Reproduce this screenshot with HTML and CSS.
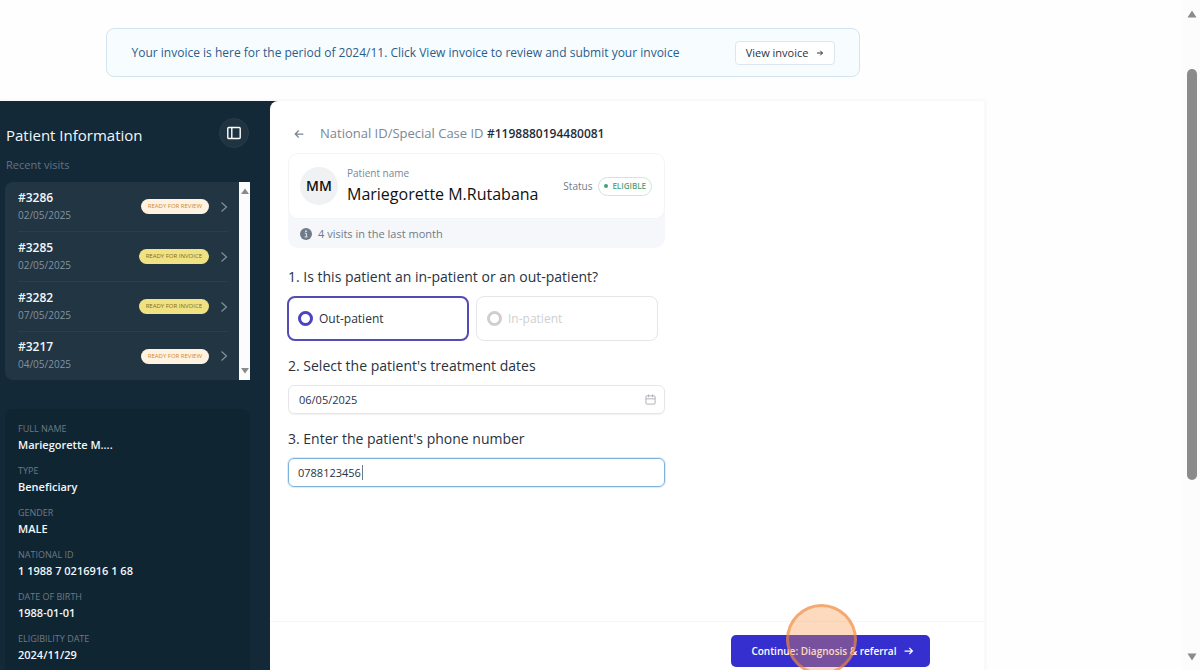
FILE: index.html
```html
<!DOCTYPE html>
<html lang="en">
<head>
    <meta charset="UTF-8">
    <meta name="viewport" content="width=device-width, initial-scale=1.0">
    <title>Patient visit</title>
    <link rel="stylesheet" href="styles.css">
</head>
<body>

    <div class="page">

        <!-- Invoice banner -->
        <div class="banner">
            <p class="banner-text">Your invoice is here for the period of 2024/11. Click View invoice to review and submit your invoice</p>
            <button type="button" class="banner-button">
                View invoice
                <svg class="arrow" viewBox="0 0 16 16"><path d="M2 8h11M8.500 3.500L13 8l-4.500 4.500"/></svg>
            </button>
        </div>

        <div class="app">

            <aside class="sidebar">
                <div class="sidebar-header">
                    <h2>Patient Information</h2>
                    <button type="button" class="toggle" aria-label="Toggle sidebar">
                        <svg viewBox="0 0 16 16"><rect x="1.8" y="2.5" width="12.4" height="11" rx="1"/><path d="M5.8 2.5v11"/></svg>
                    </button>
                </div>
                <h3>Recent visits</h3>

                <div class="visits">
                    <ul class="visit-list">
                        <li class="visit">
                            <div>
                                <div class="visit-id">#3286</div>
                                <div class="visit-date">02/05/2025</div>
                            </div>
                            <span class="tag review">READY FOR REVIEW</span>
                            <svg class="chevron" viewBox="0 0 8 12"><path d="M1.5 1.5L6.5 6l-5 4.5"/></svg>
                        </li>
                        <li class="visit">
                            <div>
                                <div class="visit-id">#3285</div>
                                <div class="visit-date">02/05/2025</div>
                            </div>
                            <span class="tag invoice">READY FOR INVOICE</span>
                            <svg class="chevron" viewBox="0 0 8 12"><path d="M1.5 1.5L6.5 6l-5 4.5"/></svg>
                        </li>
                        <li class="visit">
                            <div>
                                <div class="visit-id">#3282</div>
                                <div class="visit-date">07/05/2025</div>
                            </div>
                            <span class="tag invoice">READY FOR INVOICE</span>
                            <svg class="chevron" viewBox="0 0 8 12"><path d="M1.5 1.5L6.5 6l-5 4.5"/></svg>
                        </li>
                        <li class="visit">
                            <div>
                                <div class="visit-id">#3217</div>
                                <div class="visit-date">04/05/2025</div>
                            </div>
                            <span class="tag review">READY FOR REVIEW</span>
                            <svg class="chevron" viewBox="0 0 8 12"><path d="M1.5 1.5L6.5 6l-5 4.5"/></svg>
                        </li>
                    </ul>
                    <div class="list-scroll">
                        <svg viewBox="0 0 10 10"><path d="M5 2.5l4 5.5H1z"/></svg>
                        <svg viewBox="0 0 10 10"><path d="M5 7.5l4-5.5H1z"/></svg>
                    </div>
                </div>

                <dl class="details">
                    <div><dt>FULL NAME</dt><dd>Mariegorette M....</dd></div>
                    <div><dt>TYPE</dt><dd>Beneficiary</dd></div>
                    <div><dt>GENDER</dt><dd>MALE</dd></div>
                    <div><dt>NATIONAL ID</dt><dd>1 1988 7 0216916 1 68</dd></div>
                    <div><dt>DATE OF BIRTH</dt><dd>1988-01-01</dd></div>
                    <div><dt>ELIGIBILITY DATE</dt><dd>2024/11/29</dd></div>
                </dl>
            </aside>

            <main class="main">
                <form class="content" id="visit-form">
                    <div class="case">
                        <button type="button" class="back" aria-label="Back">
                            <svg class="arrow" viewBox="0 0 16 16"><path d="M15 8H2.500M7.500 2.500L2 8l5.500 5.500"/></svg>
                        </button>
                        <span>National ID/Special Case ID <b>#1198880194480081</b></span>
                    </div>

                    <div class="patient">
                        <div class="patient-top">
                            <div class="avatar">MM</div>
                            <div class="patient-name">
                                <small>Patient name</small>
                                <h1>Mariegorette M.Rutabana</h1>
                            </div>
                            <span class="status-label">Status</span>
                            <span class="status">ELIGIBLE</span>
                        </div>
                        <div class="patient-note">
                            <svg viewBox="0 0 12 12"><circle cx="6" cy="6" r="6" fill="#6f7b88"/><path d="M4.8 5.2h1.6v3.6M4.6 8.9h2.9" stroke="#e3e7ec" fill="none"/><circle cx="6" cy="3.2" r=".9" fill="#e3e7ec"/></svg>
                            4 visits in the last month
                        </div>
                    </div>

                    <fieldset class="question">
                        <legend>1. Is this patient an in-patient or an out-patient?</legend>
                        <div class="options">
                            <label class="option selected"><input type="radio" name="kind" value="out" checked> Out-patient</label>
                            <label class="option disabled"><input type="radio" name="kind" value="in" disabled> In-patient</label>
                        </div>
                    </fieldset>

                    <div class="question">
                        <label for="dates">2. Select the patient's treatment dates</label>
                        <div class="field">
                            <input type="text" id="dates" value="06/05/2025">
                            <svg viewBox="0 0 12 12"><rect x="1" y="2" width="10" height="9" rx=".8"/><path d="M1 5.3h10M3.8.5v3M8.2.5v3"/></svg>
                        </div>
                    </div>

                    <div class="question">
                        <label for="phone">3. Enter the patient's phone number</label>
                        <div class="field active">
                            <input type="text" id="phone" value="0788123456">
                            <span class="caret"></span>
                        </div>
                    </div>
                </form>

                <div class="footer">
                    <button type="submit" form="visit-form" class="continue">
                        Continue: Diagnosis &amp; referral
                        <svg class="arrow" viewBox="0 0 16 16"><path d="M1 8h12M8.500 3L13.500 8l-5 5"/></svg>
                        <span class="click-mark"></span>
                    </button>
                </div>
            </main>
        </div>
    </div>

    <!-- Page scrollbar -->
    <div class="page-scroll">
        <svg viewBox="0 0 12 10"><path d="M6 1.500l4.500 7h-9z"/></svg>
        <div class="track"><div class="thumb"></div></div>
        <svg viewBox="0 0 12 10"><path d="M6 8.500l4.500-7h-9z"/></svg>
    </div>

</body>
</html>
```

FILE: styles.css
```css
* {
    box-sizing: border-box;
}

body {
    margin: 0;
    display: flex;
    height: 100vh;
    overflow: hidden;
    font-family: "Open Sans", "Noto Sans", sans-serif;
    font-size: 11px;
    line-height: 16px;
    color: #27333f;
    background-color: #fefefe;
}

h1, h2, h3, p, ul, dl, dd {
    margin: 0;
    padding: 0;
    font-weight: 400;
}

button, input {
    font: inherit;
    color: inherit;
}

button {
    cursor: pointer;
}

svg {
    display: block;
    flex: none;
}

.page {
    flex: 1;
    min-width: 0;
    display: flex;
    flex-direction: column;
}

.arrow {
    width: 10px;
    height: 10px;
    fill: none;
    stroke: currentColor;
    stroke-width: 2;
}

/* Banner */
.banner {
    display: flex;
    align-items: center;
    justify-content: space-between;
    width: 754px;
    max-width: 90%;
    min-height: 49px;
    margin: 28px 0 24px 9%;
    padding: 0 24px;
    border: 1px solid #d3e5f0;
    border-radius: 8px;
    background-color: #f7fcff;
}

.banner-text {
    font-size: 12px;
    color: #2b5c8c;
}

.banner-button {
    display: flex;
    align-items: center;
    gap: 8px;
    height: 24px;
    padding: 0 10px;
    border: 1px solid #dce6f0;
    border-radius: 4px;
    background-color: #fff;
    white-space: nowrap;
}

.banner-button .arrow {
    width: 8px;
    height: 8px;
}

.app {
    flex: 1;
    min-height: 0;
    display: flex;
    width: 83.3%;
    background: linear-gradient(to right, #132938 290px, #fefefe 290px);
    box-shadow: 0 0 4px #f0f0f2;
}

/* Sidebar */
.sidebar {
    flex: none;
    width: 270px;
    padding: 17px 20px 0 5px;
    overflow: hidden;
    color: #f4f7f9;
}

.sidebar-header {
    display: flex;
    align-items: center;
    justify-content: space-between;
    padding: 0 1px;
}

.sidebar-header h2 {
    padding-top: 4px;
    font-size: 15px;
    line-height: 20px;
}

.toggle {
    display: flex;
    align-items: center;
    justify-content: center;
    width: 30px;
    height: 30px;
    padding: 0;
    border: 1px solid #293b49;
    border-radius: 50%;
    background-color: #203341;
}

.toggle svg {
    width: 16px;
    height: 16px;
    fill: none;
    stroke: #fff;
    stroke-width: 1.4;
}

.sidebar h3 {
    margin: 9px 0 9px 1px;
    font-size: 11px;
    color: #647480;
}

.visits {
    display: flex;
    height: 198px;
    border-radius: 8px 0 0 8px;
    background-color: #213543;
}

.visit-list {
    flex: 1;
    padding: 0 11px 0 13px;
    list-style: none;
}

.visit {
    display: flex;
    align-items: center;
    height: 50px;
    border-bottom: 1px solid #2a3f4d;
}

.visit:last-child {
    height: 48px;
    border-bottom: none;
}

.visit-id {
    font-size: 12px;
    font-weight: 600;
}

.visit-date {
    font-size: 10px;
    line-height: 18px;
    color: #8493a0;
}

.tag {
    margin-left: auto;
    padding: 0 7px;
    border-radius: 8px;
    font-size: 6px;
    line-height: 15px;
    white-space: nowrap;
}

.review {
    background-color: #fff2e0;
    color: #d08a2e;
}

.invoice {
    background-color: #f0e283;
    color: #85691a;
}

.chevron {
    width: 8px;
    height: 12px;
    margin-left: 11px;
    fill: none;
    stroke: #83919c;
    stroke-width: 1.2;
}

.list-scroll {
    display: flex;
    flex-direction: column;
    align-items: center;
    justify-content: space-between;
    width: 11px;
    padding: 4px 0;
    background-color: #fcfcfc;
    fill: #8a8a8a;
}

.list-scroll svg {
    width: 10px;
    height: 10px;
}

.details {
    margin-top: 29px;
    padding: 12px 13px;
    border-radius: 8px;
    background-color: #102532;
}

.details div {
    margin-bottom: 10px;
}

.details dt {
    font-size: 9px;
    color: #6b7a86;
}

.details dd {
    font-weight: 600;
}

/* Main panel */
.main {
    flex: 1;
    display: flex;
    flex-direction: column;
    border-right: 1px solid #fafafb;
    border-radius: 8px 0 0 0;
    background-color: #fff;
}

.content {
    flex: 1;
    max-width: 395px;
    padding: 23px 0 0 18px;
}

.case {
    display: flex;
    align-items: center;
    gap: 16px;
    margin-bottom: 10px;
    font-size: 13px;
    line-height: 18px;
    color: #7b8794;
}

.case b {
    font-size: 12px;
    font-weight: 600;
    color: #1f2c38;
}

.back {
    padding: 0 0 0 6px;
    border: none;
    background: none;
}

.patient {
    margin-bottom: 19px;
    overflow: hidden;
    border-radius: 10px;
    background-color: #f5f7fb;
}

.patient-top {
    display: flex;
    align-items: center;
    height: 66px;
    padding: 0 12px 0 11px;
    border: 1px solid #f3f4f6;
    border-radius: 10px;
    background-color: #fff;
}

.avatar {
    width: 38px;
    height: 38px;
    border-radius: 50%;
    background-color: #f0f1f2;
    font-size: 14px;
    font-weight: 600;
    line-height: 38px;
    text-align: center;
    color: #111;
}

.patient-name {
    flex: 1;
    margin-left: 9px;
}

.patient-name small {
    display: block;
    font-size: 10px;
    color: #7b8794;
}

.patient-name h1 {
    font-size: 16px;
    line-height: 26px;
    color: #111;
}

.status-label {
    margin-right: 6px;
    font-size: 10px;
    color: #6f7b88;
}

.status {
    display: flex;
    align-items: center;
    height: 19px;
    padding: 0 5px;
    border: 1px solid #cfe6da;
    border-radius: 10px;
    font-size: 8px;
    font-weight: 600;
    color: #57a67c;
}

.status::before {
    content: "";
    width: 4px;
    height: 4px;
    margin-right: 4px;
    border-radius: 50%;
    background-color: #45a074;
}

.patient-note {
    display: flex;
    align-items: center;
    gap: 6px;
    height: 29px;
    padding: 0 12px;
    color: #6f7b88;
}

.patient-note svg {
    width: 12px;
    height: 12px;
}

.question {
    margin: 0 0 15px;
    padding: 0;
    border: none;
}

.question legend,
.question > label {
    display: block;
    margin-bottom: 9px;
    padding: 0;
    font-size: 14px;
    line-height: 20px;
}

.options {
    display: flex;
    gap: 7px;
    margin: 0 7px 0 -1px;
}

.option {
    flex: 1;
    display: flex;
    align-items: center;
    gap: 6px;
    height: 45px;
    padding: 0 10px;
    border: 1px solid #e6e6e8;
    border-radius: 8px;
    font-size: 12px;
}

.option.selected {
    border: 2px solid #544cb5;
    padding: 0 9px;
}

.option.disabled {
    color: #cfcfcf;
}

.option input {
    appearance: none;
    width: 15px;
    height: 15px;
    margin: 0;
    border: 3px solid #cfcfcf;
    border-radius: 50%;
}

.option input:checked {
    border-color: #4b43bf;
}

.field {
    position: relative;
    display: flex;
    align-items: center;
    height: 29px;
    padding: 0 8px 0 10px;
    border: 1px solid #e6e6e8;
    border-radius: 6px;
    box-shadow: 0 1px 1px #f1f1f1;
}

.field.active {
    padding-left: 9px;
    border-color: #7db2dd;
    box-shadow: 0 0 0 1px #dcecf8;
}

.field input {
    flex: 1;
    min-width: 0;
    padding: 0;
    border: none;
    outline: none;
    background: none;
}

.field svg {
    width: 11px;
    height: 11px;
    fill: none;
    stroke: #a9adb2;
}

/* Text cursor after the phone number */
.caret {
    position: absolute;
    top: 6px;
    left: 73px;
    width: 1px;
    height: 15px;
    background-color: #6f7b88;
}

.footer {
    display: flex;
    justify-content: flex-end;
    height: 49px;
    padding: 13px 54px 0 0;
    border-top: 1px solid #f6f6f8;
}

.continue {
    position: relative;
    display: flex;
    align-items: center;
    gap: 8px;
    height: 32px;
    padding: 0 16px 0 20px;
    border: none;
    border-radius: 5px;
    background-color: #342fce;
    font-size: 10px;
    font-weight: 600;
    color: #fff;
}

/* Click marker over the button */
.click-mark {
    position: absolute;
    top: -31px;
    left: 55px;
    width: 71px;
    height: 71px;
    border: 3px solid rgba(238, 135, 60, 0.6);
    border-radius: 50%;
    background-color: rgba(250, 145, 70, 0.35);
}

/* Scrollbar */
.page-scroll {
    display: flex;
    flex-direction: column;
    align-items: center;
    width: 17px;
    padding: 9px 0 8px;
    background-color: #fcfcfc;
    fill: #8b8b8b;
}

.page-scroll svg {
    width: 12px;
    height: 10px;
}

.track {
    flex: 1;
    padding-top: 50px;
}

.thumb {
    width: 10px;
    height: 70.5%;
    border-radius: 5px;
    background-color: #8b8b8b;
}
```
